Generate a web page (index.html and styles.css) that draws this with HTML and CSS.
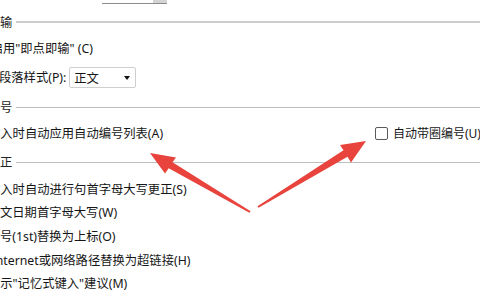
FILE: index.html
```html
<!DOCTYPE html>
<html lang="zh-CN">
<head>
<meta charset="utf-8">
<link rel="stylesheet" href="styles.css">
</head>
<body>
<div class="page">
  <div class="topbar"><div class="field"><div class="spin"></div></div></div>

  <div class="group thick g1"><span class="h3">即点即输</span></div>
  <div class="row r-c"><span class="t3">启用"即点即输" (C)</span></div>
  <div class="row r-p"><span class="t2">默认段落样式(P):</span>
    <div class="select"><span>正文</span><i class="caret"></i></div>
  </div>

  <div class="group g2"><span class="h3">自动编号</span></div>
  <div class="row split r-a">
    <span class="t1">键入时自动应用自动编号列表(A)</span>
    <label class="check"><span class="box"></span><span class="small">自动带圈编号(U)</span></label>
  </div>

  <div class="group g3"><span class="h3">自动更正</span></div>
  <div class="row r-s"><span class="t1">键入时自动进行句首字母大写更正(S)</span></div>
  <div class="row"><span class="t1b">英文日期首字母大写(W)</span></div>
  <div class="row"><span class="t1b">序号(1st)替换为上标(O)</span></div>
  <div class="row"><span class="tin">Internet或网络路径替换为超链接(H)</span></div>
  <div class="row"><span class="t1">显示"记忆式键入"建议(M)</span></div>
</div>

<svg class="arrows" width="480" height="300" viewBox="0 0 480 300">
  <polygon fill="#e8433d" points="150,153 176,157.5 172.5,162.3 250.6,211.3 249.4,212.7 168.7,168.3 165,173.5"/>
  <polygon fill="#e8433d" points="366,141 351,162.5 347.5,156.8 258.5,207.7 257.5,206.3 343.5,150.3 340,145"/>
</svg>
</body>
</html>
```
FILE: styles.css
```css
html, body {
  margin: 0;
  padding: 0;
  background: #ffffff;
  overflow: hidden;
}
body {
  width: 480px;
  height: 300px;
  position: relative;
  font-family: "Noto Sans", "Noto Sans CJK SC", sans-serif;
  font-size: 12.3px;
  color: #161616;
}
.page {
  display: flex;
  flex-direction: column;
  white-space: nowrap;
}
.topbar {
  height: 4px;
  display: flex;
}
.field {
  margin-left: 102px;
  width: 65px;
  height: 3px;
  border-bottom: 1px solid #8c8c8c;
  display: flex;
  justify-content: flex-end;
}
.spin {
  width: 14px;
  height: 3px;
  background: #d4d4d4;
}
.group {
  height: 24px;
  display: flex;
  align-items: center;
  color: #222;
}
.group::after {
  content: "";
  flex: 1;
  height: 1px;
  background: #bdbdbd;
  margin-left: 4px;
}
.group.thick::after {
  height: 2px;
  background: #cdcdcd;
}
.g1 { margin-top: 6px; }
.g2 { margin-top: 6px; }
.g3 { margin-top: 5px; }
.row {
  height: 23.6px;
  display: flex;
  align-items: center;
}
.r-c { margin-top: 2px; height: 24px; }
.r-p { margin-top: 5px; height: 24px; }
.r-a { margin-top: 2px; height: 24px; }
.r-s { margin-top: 3px; }
.h3 { margin-left: -36.9px; }
.t3 { margin-left: -9.3px; }
.t2 { margin-left: -25.6px; }
.t1 { margin-left: -12px; }
.t1b { margin-left: -12.3px; }
.tin { margin-left: -8.5px; }
.select {
  margin-left: 3px;
  width: 67px;
  height: 21px;
  border: 1px solid #cfcfcf;
  border-radius: 2px;
  box-sizing: border-box;
  display: flex;
  align-items: center;
  padding: 0 5px 0 4px;
  margin-top: 1px;
}
.select span { flex: 1; }
.caret {
  width: 0;
  height: 0;
  border-left: 3.5px solid transparent;
  border-right: 3.5px solid transparent;
  border-top: 4px solid #111;
}
.split {
  display: grid;
  grid-template-columns: 375px auto;
  align-items: center;
}
.split .t1 { justify-self: start; }
.check {
  display: flex;
  align-items: center;
}
.box {
  width: 13px;
  height: 13px;
  box-sizing: border-box;
  border: 1px solid #5a5a5a;
  border-radius: 2px;
  background: #fff;
  margin-right: 5px;
}
.small {
  font-size: 12px;
}
.arrows {
  position: absolute;
  left: 0;
  top: 0;
  pointer-events: none;
}
```
